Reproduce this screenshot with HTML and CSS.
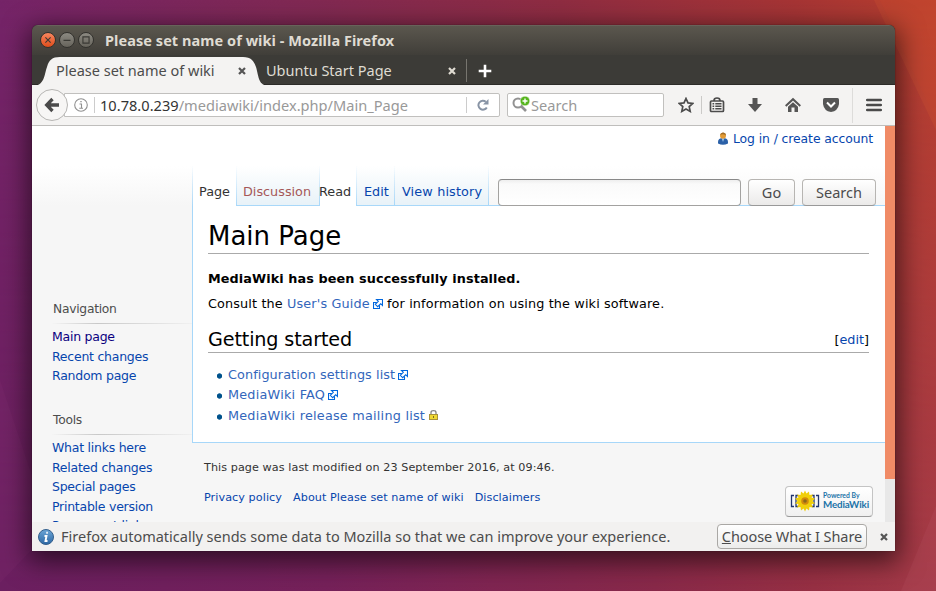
FILE: index.html
```html
<!DOCTYPE html>
<html lang="en">
<head>
<meta charset="utf-8">
<title>Please set name of wiki - Mozilla Firefox</title>
<link rel="stylesheet" href="styles.css">
</head>
<body>
<svg class="wallpaper" viewBox="0 0 936 591" preserveAspectRatio="none" aria-hidden="true">
  <defs>
    <linearGradient id="wt"><stop offset="0" stop-color="#752468"/><stop offset=".3" stop-color="#802955"/><stop offset=".6" stop-color="#8f2d42"/><stop offset=".85" stop-color="#a63535"/><stop offset="1" stop-color="#b83f2e"/></linearGradient>
    <linearGradient id="wb"><stop offset="0" stop-color="#6b1f60"/><stop offset=".35" stop-color="#75215a"/><stop offset=".7" stop-color="#89294a"/><stop offset=".87" stop-color="#973044"/><stop offset="1" stop-color="#a33a48"/></linearGradient>
    <linearGradient id="fade" x2="0" y2="1"><stop offset="0" stop-color="#000"/><stop offset="1" stop-color="#fff"/></linearGradient>
    <mask id="m"><rect width="936" height="591" fill="url(#fade)"/></mask>
  </defs>
  <rect width="936" height="591" fill="url(#wt)"/>
  <rect width="936" height="591" fill="url(#wb)" mask="url(#m)"/>
  <path d="M580 0H936V120L880 0H580L555 25Z" fill="#d0402a" opacity=".14"/>
  <path d="M874 0H936V130Z" fill="#dc6032" opacity=".2"/>
  <path d="M936 506L901 591H936Z" fill="#c06070" opacity=".16"/>
  <path d="M0 380L50 530L0 583Z" fill="#8a347c" opacity=".15"/>
</svg>
<main class="window">
  <header class="titlebar">
    <span class="wbtn close"><svg viewBox="0 0 16 16"><path d="M5 5l6 6m0-6l-6 6"/></svg></span>
    <span class="wbtn"><svg viewBox="0 0 16 16"><path d="M4 8.500h8"/></svg></span>
    <span class="wbtn"><svg viewBox="0 0 16 16"><path d="M4.500 4.500h7v7h-7z"/></svg></span>
    <span class="title">Please set name of wiki - Mozilla Firefox</span>
  </header>
  <nav class="tabstrip">
    <div class="tab active">
      <svg class="tabshape" viewBox="0 0 238 29"><path d="M0 29C13 29 12 18 15 10C17 3 20 0 28 0H211C219 0 222 4 224 10C227 20 226 29 238 29Z" fill="#f4f3f2"/></svg>
      <span class="tablabel one">Please set name of wiki</span>
      <svg class="x" viewBox="0 0 8 8"><path d="M1 1l6 6m0-6l-6 6"/></svg>
    </div>
    <div class="tab second">
      <span class="tablabel two">Ubuntu Start Page</span>
      <svg class="x" viewBox="0 0 8 8"><path d="M1 1l6 6m0-6l-6 6"/></svg>
    </div>
    <svg class="plus" viewBox="0 0 14 14"><path d="M7 .7v12.600M.7 7h12.600"/></svg>
  </nav>
  <div class="toolbar">
    <div class="back"><svg viewBox="0 0 16 16"><path d="M8.500 2L2.700 8L8.500 14M3 8H15"/></svg></div>
    <div class="url">
      <svg class="info" viewBox="0 0 14 14"><circle cx="7" cy="7" r="6.300"/><path d="M5.500 6H7.500V10M5.300 10.200H9M6.300 3.600H7.700"/></svg>
      <span class="addr"><b>10.78.0.239</b>/mediawiki/index.php/Main_Page</span>
      <span class="reload"><svg viewBox="0 0 12 12"><path d="M9.800 8.500A4.500 4.500 0 1 1 8.800 2.700" fill="none" stroke="#8894a5" stroke-width="2"/><path d="M11.500 0V5.500H6Z" fill="#8894a5"/></svg></span>
    </div>
    <div class="search">
      <svg viewBox="0 0 18 18"><circle cx="6" cy="7" r="4.500" fill="none" stroke="#929292" stroke-width="2"/><path d="M9.500 10.500L14 15" stroke="#929292" stroke-width="2.700"/><circle cx="13" cy="5" r="4.800" fill="#56b51d" stroke="#fff" stroke-width=".5"/><path d="M13 2.500v5M10.500 5h5" stroke="#fff" stroke-width="1.400"/></svg>
      <span>Search</span>
    </div>
    <div class="tools">
      <svg class="t1" viewBox="0 0 16 16"><path d="M8 1.500L10 5.900L14.800 6.400L11.200 9.600L12.200 14.400L8 12L3.800 14.400L4.800 9.600L1.200 6.400L6 5.900Z" fill="none" stroke="#4c4c4c" stroke-width="1.700"/></svg>
      <i></i>
      <svg class="t2" viewBox="0 0 16 16"><path d="M5 3.500Q5 1 8 1T11 3.500M2.500 4H13.500Q14.500 4 14.500 5V13.500Q14.500 14.500 13.500 14.500H2.500Q1.500 14.500 1.500 13.500V5Q1.500 4 2.500 4Z" fill="none" stroke="#4c4c4c" stroke-width="1.700"/><path d="M3.500 6.800h1.700M6.300 6.800h6.200M3.500 9.300h1.700M6.300 9.300h6.200M3.500 11.800h1.700M6.300 11.800h6.200" stroke="#4c4c4c" stroke-width="1.400"/></svg>
      <svg class="t3" viewBox="0 0 16 16"><path d="M5.500 1H10.500V7H15L8 15L1 7H5.500Z" fill="#555"/></svg>
      <svg class="t4" viewBox="0 0 16 16"><path d="M.7 9L8 2.200L15.300 9" fill="none" stroke="#555" stroke-width="2"/><path d="M3 9.800L8 5.200L13 9.800V15H9.500V10.500H6.500V15H3Z" fill="#555"/></svg>
      <svg class="t5" viewBox="0 0 16 16"><path d="M1.500 1H14.500Q16 1 16 2.500V7Q15 14 8 15Q1 14 0 7V2.500Q0 1 1.500 1Z" fill="#555"/><path d="M4 5.500L8 9.500L12 5.500" fill="none" stroke="#fff" stroke-width="2"/></svg>
      <u></u>
      <svg class="t6" viewBox="0 0 16 14"><path d="M1.200 2H14.800M1.200 7H14.800M1.200 12H14.800" stroke="#4a4a4a" stroke-width="2.600" stroke-linecap="round"/></svg>
    </div>
  </div>
  <div class="viewport">
    <aside class="sidebar">
      <h3>Navigation</h3>
      <ul><li class="seen">Main page</li><li>Recent changes</li><li>Random page</li></ul>
      <h3 class="th">Tools</h3>
      <ul><li>What links here</li><li>Related changes</li><li>Special pages</li><li>Printable version</li><li>Permanent link</li></ul>
    </aside>
    <div class="page">
      <div class="personal">
        <svg viewBox="0 0 12 13"><path d="M1 10Q1 6 6 6T11 10V11.500Q6 14 1 11.500Z" fill="#2b61a8"/><path d="M4.500 6H7.500L6 10Z" fill="#9dc3ea"/><circle cx="6" cy="3.700" r="3" fill="#e39b35"/><path d="M3 3Q4 0 6.500 .5Q9 1 9 3.500Q6 1.500 3 3" fill="#a46f28"/></svg>
        <span>Log in / create account</span>
      </div>
      <div class="wikitabs">
        <span class="wt sel page-t">Page</span><span class="wt red disc">Discussion</span><span class="wt sel read">Read</span><span class="wt edit">Edit</span><span class="wt hist">View history</span>
        <div class="find"><span class="box"></span><span class="btn go">Go</span><span class="btn se">Search</span></div>
      </div>
      <article>
        <h1>Main Page</h1>
        <p class="bold">MediaWiki has been successfully installed.</p>
        <p class="consult">Consult the <a>User's Guide</a><svg class="ext" viewBox="0 0 10 10"><path d="M3.500 3.500H.5V9.500H6.500V6.500M3.500 .5H9.500V6.500L7.700 4.700L4.700 7.700L2.300 5.300L5.300 2.300Z"/></svg> for information on using the wiki software.</p>
        <h2><span>Getting started</span><small>[<a>edit</a>]</small></h2>
        <ul>
          <li class="config"><a>Configuration settings list</a><svg class="ext" viewBox="0 0 10 10"><path d="M3.500 3.500H.5V9.500H6.500V6.500M3.500 .5H9.500V6.500L7.700 4.700L4.700 7.700L2.300 5.300L5.300 2.300Z"/></svg></li>
          <li><a>MediaWiki FAQ</a><svg class="ext" viewBox="0 0 10 10"><path d="M3.500 3.500H.5V9.500H6.500V6.500M3.500 .5H9.500V6.500L7.700 4.700L4.700 7.700L2.300 5.300L5.300 2.300Z"/></svg></li>
          <li><a>MediaWiki release mailing list</a><svg class="lock" viewBox="0 0 9 10"><path d="M2 5V2.500Q2 .7 4.500 .7T7 2.500V5" fill="none" stroke="#858585" stroke-width="1.300"/><rect x=".5" y="4.500" width="8" height="5" fill="#efd832" stroke="#a8923a"/><path d="M4.500 6v2" stroke="#7d6a20"/></svg></li>
        </ul>
      </article>
      <footer>
        <p>This page was last modified on 23 September 2016, at 09:46.</p>
        <div class="foot">
          <span class="f1">Privacy policy</span><span class="f2">About Please set name of wiki</span><span>Disclaimers</span>
          <div class="badge">
            <svg viewBox="0 0 30 22"><path d="M4 5.500H1.500V16.500H4M8 5.500H6V16.500H8M26 5.500H28.500V16.500H26M22 5.500H24V16.500H22" fill="none" stroke="#20356f" stroke-width="1.300"/><path d="M15 .5l1.500 3 2.500-2 .5 3.500 3.500-.5-1.500 3 3.500 1-2.500 2.500 2.500 2.500-3.500.5 1.500 3.500-3.500-.5-.5 3.500-2.500-2-1.500 3-1.500-3-2.500 2-.5-3.500-3.500.5 1.500-3.500-3.500-.5 2.500-2.500-2.500-2.500 3.500-1-1.500-3 3.500.5.5-3.500 2.500 2z" fill="#f0cf0b"/><circle cx="15" cy="11" r="3.800" fill="#d28b0c"/><circle cx="15" cy="11" r="1.800" fill="#8b681b"/></svg>
            <div><span class="pb">Powered By</span><span class="mw">MediaWiki</span></div>
          </div>
        </div>
      </footer>
    </div>
    <div class="scroll"><div></div></div>
  </div>
  <div class="notice">
    <svg class="ninfo" viewBox="0 0 16 16"><defs><linearGradient id="ib" x2="0" y2="1"><stop stop-color="#6ca5d6"/><stop offset="1" stop-color="#2d68a4"/></linearGradient></defs><circle cx="8" cy="8" r="7.500" fill="url(#ib)" stroke="#345f8c"/><path d="M6.500 7H8.500L7.500 12H9.500M8.300 3.700H9.800" fill="none" stroke="#fff" stroke-width="1.900"/></svg>
    <span class="msg">Firefox automatically sends some data to Mozilla so that we can improve your experience.</span>
    <span class="choose"><span><u>C</u>hoose What I Share</span></span>
    <svg class="x" viewBox="0 0 8 8"><path d="M1 1l6 6m0-6l-6 6"/></svg>
  </div>
</main>
</body>
</html>
```
FILE: styles.css
```css
* { box-sizing: border-box; }
body { margin: 0; width: 936px; height: 591px; overflow: hidden; padding: 25px 0 0 32px; background: #75225f; font-family: "DejaVu Sans", sans-serif; font-size: 12.8px; }
ul, p, h1, h2, h3 { margin: 0; padding: 0; font-weight: normal; list-style: none; }
svg { display: block; flex: none; }
span { white-space: nowrap; }
.wallpaper { position: absolute; left: 0; top: 0; width: 936px; height: 591px; z-index: -1; }
.window { width: 863px; height: 526px; display: flex; flex-direction: column; border-radius: 6px 6px 0 0; overflow: hidden; background: #3c3b37; }
.window { box-shadow: 0 0 1px rgba(0,0,0,.8), 0 7px 26px 4px rgba(0,0,0,.58); }
.titlebar, .tabstrip, .toolbar, .notice, .btn { font-family: "Noto Sans", sans-serif; font-size: 15px; }
.titlebar { height: 30px; flex: none; display: flex; align-items: center; padding: 0 0 2px 8px; background: linear-gradient(#5b574e, #403e39); border-top: 1px solid #67635a; }
.wbtn { width: 16px; height: 16px; margin-right: 3px; border-radius: 50%; background: linear-gradient(#8c8a82, #66635b); border: 1px solid #33322e; }
.wbtn svg { width: 14px; height: 14px; fill: none; stroke: #3a3934; stroke-width: 1.3; }
.wbtn.close { background: linear-gradient(#f7865f, #de4d1b); }
.title { font-weight: bold; color: #dfdbd2; margin-left: 8px; font-size: 14.5px; letter-spacing: .06px; }
.tabstrip { height: 30px; padding-top: 2px; flex: none; display: flex; background: #3c3b37; border-bottom: 1px solid #2c2b28; }
.tab { height: 28px; display: flex; align-items: center; position: relative; }
.tab.active { width: 226px; padding: 0 0 1px 24px; color: #4c4c4c; }
.tabshape { position: absolute; left: 0; top: 0; width: 238px; height: 29px; }
.tablabel { position: relative; font-size: 14.5px; line-height: 20px; margin-bottom: 1px; }
.one { width: 182px; }
.two { width: 182px; color: #dfdbd2; }
.second { width: 209px; padding-left: 8px; border-right: 1px solid #77756f; height: 23px; margin-top: 2px; }
.x { width: 8px; height: 8px; fill: none; stroke: #555; stroke-width: 2.2; position: relative; }
.second .x { stroke: #dfdbd2; }
.plus { width: 14px; height: 14px; margin: 7px 0 0 11px; stroke: #fff; stroke-width: 2.6; }
.toolbar { height: 41px; flex: none; display: flex; align-items: center; background: #f4f3f2; border-bottom: 1px solid #bfbebc; padding-left: 4px; }
.back { width: 32px; height: 32px; border: 1px solid #b7b6b4; border-radius: 50%; background: #f7f6f5; display: flex; align-items: center; justify-content: center; position: relative; z-index: 1; flex: none; }
.back svg { width: 16px; height: 16px; fill: none; stroke: #4a4a4a; stroke-width: 3.3; }
.url { width: 436px; height: 24px; margin-left: -4px; border: 1px solid #c1c0be; background: #fff; border-radius: 0 2px 2px 0; display: flex; align-items: center; padding-left: 9px; flex: none; }
.info { width: 14px; height: 14px; fill: none; stroke: #909090; stroke-width: 1.1; }
.addr { margin-left: 6px; border-left: 1px solid #ccc; height: 16px; line-height: 16px; padding-left: 5px; width: 372px; color: #999; font-size: 14.6px; letter-spacing: .01px; }
.addr b { font-weight: normal; color: #333; }
.reload { border-left: 1px solid #ccc; height: 16px; padding: 2px 0 0 10px; }
.reload svg { width: 12px; height: 12px; }
.search { width: 157px; height: 24px; margin-left: 7px; border: 1px solid #c1c0be; background: #fff; border-radius: 2px; display: flex; align-items: center; color: #999; padding-left: 4px; flex: none; font-size: 14.6px; }
.search svg { width: 18px; height: 18px; margin-top: -1px; }
.search span { margin-left: 1px; }
.tools { display: flex; align-items: center; height: 40px; }
.tools svg { width: 16px; height: 16px; }
.t1 { margin-left: 14px; }
.tools i { width: 1px; height: 18px; background: #cbcac8; margin: 0 7px 0 7px; }
.t3, .t4, .t5 { margin-left: 22px; }
.tools u { width: 1px; height: 35px; background: #dddcda; margin: 0 13px; }
.tools svg.t6 { height: 14px; }
.viewport { height: 396px; flex: none; overflow: hidden; display: flex; background: linear-gradient(#fff 0, #fff 40px, #f6f6f6 80px, #f6f6f6 100%); }
.sidebar { width: 160px; flex: none; padding: 173px 0 0 20px; color: #0645ad; }
.sidebar h3 { color: #4d4d4d; height: 25px; line-height: 21px; padding-left: 1px; font-size: 12.3px; letter-spacing: -.27px; border-bottom: 1px solid; border-image: linear-gradient(90deg, rgba(200,200,200,0), #c8c8c8 33%, rgba(200,200,200,.1)) 1; }
.sidebar ul { padding-top: 3px; height: 86px; }
.sidebar li { height: 19.6px; line-height: 20px; font-size: 12.5px; letter-spacing: -.25px; }
.sidebar .seen { color: #0b0080; }
.page { width: 693px; flex: none; }
.personal { height: 40px; padding: 5px 12px 0 0; display: flex; justify-content: flex-end; gap: 4px; color: #0645ad; font-size: 12.4px; letter-spacing: -.09px; line-height: 16px; }
.personal svg { width: 12px; height: 13px; margin-top: 1px; }
.wikitabs { height: 40px; display: flex; border-left: 1px solid; border-image: linear-gradient(rgba(167,215,249,0), #a7d7f9) 1; color: #0645ad; }
.wt { height: 40px; line-height: 51px; border: 0 solid; border-right-width: 1px; border-bottom-width: 1px; border-image: linear-gradient(rgba(167,215,249,0), #a7d7f9) 1; background: linear-gradient(#fff, #e8f2f8); padding-left: 7px; }
.wt.sel { border-bottom-width: 0; color: #333; background: #fff; }
.wt.red { color: #a55858; padding-left: 6px; }
.page-t { width: 44px; padding-left: 6px; }
.disc { width: 83px; }
.wt.read { width: 37px; padding-left: 0; text-indent: -1px; }
.edit { width: 38px; }
.hist { width: 94px; letter-spacing: .14px; }
.find { flex: 1; display: flex; padding: 13px 0 0 9px; border-bottom: 1px solid #a7d7f9; }
.box { width: 243px; height: 27px; border: 1px solid #a3a2a0; border-top-color: #888; border-radius: 4px; background: linear-gradient(#eee, #fafafa 4px, #fff); }
.btn { height: 27px; line-height: 25px; border: 1px solid #b7b5b2; border-bottom-color: #999; border-radius: 4px; background: linear-gradient(#fff, #ebeae9); color: #4c4c4c; text-align: center; font-size: 14.5px; margin-left: 7px; }
.go { width: 47px; }
.se { width: 74px; }
article { height: 237px; border-left: 1px solid #a7d7f9; border-bottom: 1px solid #a7d7f9; background: #fff; padding: 14px 16px 0 15px; color: #000; }
article a { color: #36b; }
h1 { font-size: 26px; height: 34px; line-height: 33px; border-bottom: 1px solid #aaa; }
.bold { font-weight: bold; margin-top: 15px; height: 20px; line-height: 20px; letter-spacing: .09px; }
.consult { margin-top: 5px; height: 20px; line-height: 20px; white-space: nowrap; letter-spacing: .14px; }
.ext, .lock { display: inline-block; width: 10px; height: 10px; margin-left: 3px; vertical-align: -1px; }
.ext { fill: #fff; stroke: #06d; stroke-width: 1.1; }
.lock { width: 9px; margin-left: 4px; vertical-align: 0; }
h2 { margin-top: 12px; height: 27px; line-height: 27px; font-size: 19.2px; border-bottom: 1px solid #aaa; display: flex; justify-content: space-between; letter-spacing: -.14px; }
h2 small { font-size: 12.8px; letter-spacing: 0; }
h2 small a { color: #0645ad; }
article ul { padding-top: 12px; }
article li { height: 20.4px; line-height: 20px; padding-left: 20px; letter-spacing: .23px; background: radial-gradient(circle at 11.5px 11px, #00528c 2.3px, transparent 3px); }
article .config { letter-spacing: .09px; }
footer { padding-left: 12px; font-size: 11.2px; letter-spacing: .07px; color: #333; }
footer p { padding-top: 16px; line-height: 17px; }
.foot { display: flex; height: 53px; margin-top: 10px; padding: 0 12px 0 0; color: #0645ad; line-height: 23px; }
.f1, .f2 { margin-right: 11px; }
.badge { margin-left: auto; width: 88px; height: 31px; border: 1px solid #c4c4c4; border-bottom-color: #999; border-radius: 4px; background: linear-gradient(#fff, #f0f0f0); display: flex; align-items: center; padding: 0 0 3px 4px; }
.badge svg { width: 30px; height: 22px; margin-top: 1px; }
.badge div { font-family: Lato, sans-serif; letter-spacing: 0; margin-left: 3px; color: #1b73a8; }
.badge span { display: block; }
.pb { font-size: 6.8px; font-weight: bold; line-height: 8px; }
.mw { font-size: 9.8px; font-weight: bold; line-height: 10px; letter-spacing: -.15px; }
.scroll { width: 10px; background: #e8e8e8; flex: none; }
.scroll div { height: 353px; background: #f08b66; }
.notice { height: 29px; flex: none; display: flex; align-items: center; background: #f2f1f0; color: #4c4c4c; padding-left: 6px; }
.ninfo { width: 16px; height: 16px; }
.msg { margin-left: 7px; width: 656px; font-size: 14.5px; margin-bottom: 2px; }
.choose { width: 150px; height: 25px; line-height: 23px; border: 1px solid #aaa8a5; border-radius: 4px; background: linear-gradient(#fff, #ececeb); display: flex; justify-content: center; margin-right: 13px; font-size: 14.5px; letter-spacing: -.08px; }
```
